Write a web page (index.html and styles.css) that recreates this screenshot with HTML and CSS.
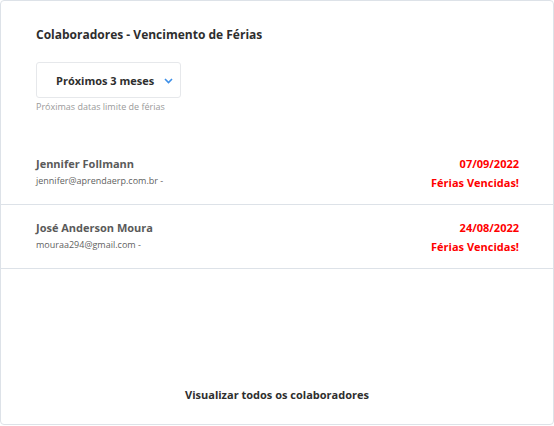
FILE: index.html
```html
<!DOCTYPE html>
<html lang="pt-BR">
<head>
<meta charset="utf-8">
<title>Colaboradores - Vencimento de Férias</title>
<link rel="stylesheet" href="styles.css">
</head>
<body>
<div class="card">
  <div class="card-head">
    <h2 class="title">Colaboradores - Vencimento de Férias</h2>
    <div class="select">
      <span class="select-label">Próximos 3 meses</span>
      <svg class="chevron" width="9" height="6" viewBox="0 0 9 6"><path d="M1 1l3.5 3.5L8 1" fill="none" stroke="#3d8fe8" stroke-width="1.6"/></svg>
    </div>
    <div class="hint">Próximas datas limite de férias</div>
  </div>
  <ul class="list">
    <li class="row">
      <div class="person">
        <div class="name">Jennifer Follmann</div>
        <div class="email">jennifer@aprendaerp.com.br -</div>
      </div>
      <div class="status">
        <div class="date">07/09/2022</div>
        <div class="expired">Férias Vencidas!</div>
      </div>
    </li>
    <li class="row">
      <div class="person">
        <div class="name">José Anderson Moura</div>
        <div class="email">mouraa294@gmail.com -</div>
      </div>
      <div class="status">
        <div class="date">24/08/2022</div>
        <div class="expired">Férias Vencidas!</div>
      </div>
    </li>
  </ul>
  <div class="card-foot">
    <a class="view-all" href="#">Visualizar todos os colaboradores</a>
  </div>
</div>
</body>
</html>
```
FILE: styles.css
```css
html, body {
  margin: 0;
  padding: 0;
  background: #ffffff;
}
body {
  font-family: "Open Sans", "Noto Sans", sans-serif;
  color: #333;
}
.card {
  box-sizing: border-box;
  width: 554px;
  height: 425px;
  border: 1px solid #dde2e8;
  border-radius: 4px;
  background: #fff;
  display: flex;
  flex-direction: column;
}
.card-head {
  padding: 26px 34px 0 35px;
}
.title {
  margin: 0;
  font-size: 12px;
  line-height: 16px;
  font-weight: 700;
  color: #2e2e2e;
}
.select {
  box-sizing: border-box;
  margin-top: 19px;
  width: 145px;
  height: 36px;
  border: 1px solid #e6e8eb;
  border-radius: 3px;
  display: flex;
  align-items: center;
  padding-left: 19px;
  padding-right: 7px;
}
.select-label {
  font-size: 11px;
  font-weight: 700;
  color: #2e2e2e;
  flex: 1;
}
.chevron {
  display: block;
  margin-top: 2px;
}
.hint {
  margin-top: 2px;
  font-size: 9px;
  line-height: 13px;
  color: #9a9a9a;
}
.list {
  list-style: none;
  margin: 28px 0 0;
  padding: 0;
}
.row {
  box-sizing: border-box;
  height: 64px;
  border-bottom: 1px solid #dde2e8;
  display: flex;
  justify-content: space-between;
  padding: 15px 34px 0 35px;
}
.name {
  font-size: 11px;
  line-height: 15px;
  font-weight: 700;
  color: #5a5a5a;
}
.email {
  margin-top: 3px;
  font-size: 9px;
  line-height: 14px;
  color: #5f5f5f;
}
.status {
  text-align: right;
}
.date, .expired {
  font-size: 11px;
  line-height: 15px;
  font-weight: 700;
  color: #ff0000;
}
.expired {
  margin-top: 4px;
}
.card-foot {
  margin-top: auto;
  padding-bottom: 20px;
  text-align: center;
}
.view-all {
  font-size: 11px;
  font-weight: 700;
  color: #2e2e2e;
  text-decoration: none;
}
```
